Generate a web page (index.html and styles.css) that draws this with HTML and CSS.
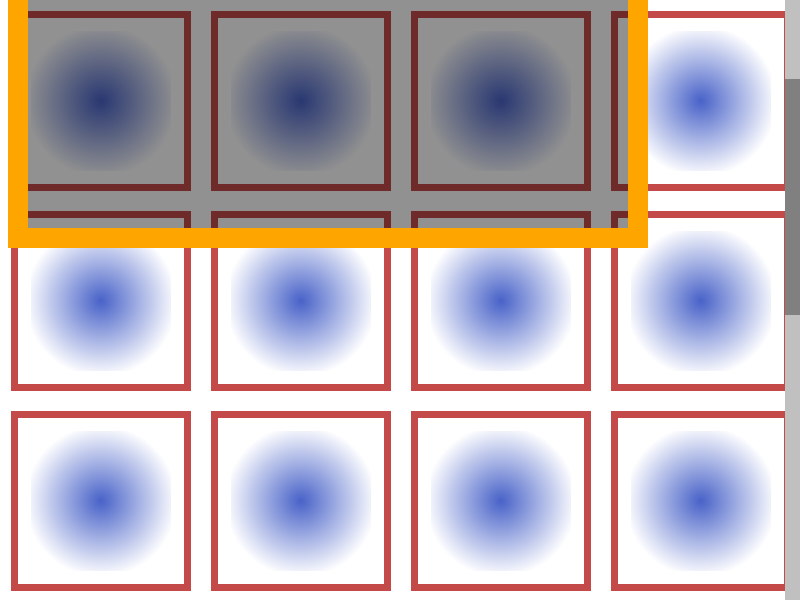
FILE: index.html
```html
<!DOCTYPE html>
<html lang="en">

<head>
    <meta charset="UTF-8">
    <meta name="viewport" content="width=device-width, initial-scale=1.0">
    <title>Selection Grid</title>
    <link rel="stylesheet" href="styles.css">
</head>

<body>
    <div class="grid">
        <div class="tile"><div class="blob"></div></div>
        <div class="tile"><div class="blob"></div></div>
        <div class="tile"><div class="blob"></div></div>
        <div class="tile"><div class="blob"></div></div>
        <div class="tile"><div class="blob"></div></div>
        <div class="tile"><div class="blob"></div></div>
        <div class="tile"><div class="blob"></div></div>
        <div class="tile"><div class="blob"></div></div>
        <div class="tile"><div class="blob"></div></div>
        <div class="tile"><div class="blob"></div></div>
        <div class="tile"><div class="blob"></div></div>
        <div class="tile"><div class="blob"></div></div>
        <div class="tile"><div class="blob"></div></div>
        <div class="tile"><div class="blob"></div></div>
        <div class="tile"><div class="blob"></div></div>
        <div class="tile"><div class="blob"></div></div>
        <div class="tile"><div class="blob"></div></div>
        <div class="tile"><div class="blob"></div></div>
        <div class="tile"><div class="blob"></div></div>
        <div class="tile"><div class="blob"></div></div>
        <div class="tile"><div class="blob"></div></div>
        <div class="tile"><div class="blob"></div></div>
        <div class="tile"><div class="blob"></div></div>
        <div class="tile"><div class="blob"></div></div>
        <div class="tile"><div class="blob"></div></div>
        <div class="tile"><div class="blob"></div></div>
        <div class="tile"><div class="blob"></div></div>
        <div class="tile"><div class="blob"></div></div>
    </div>

    <div class="selection"></div>

    <div class="scrollbar">
        <div class="scrollbar-thumb"></div>
    </div>

    <script>
        window.scrollTo(0, 200);
    </script>
</body>

</html>
```

FILE: styles.css
```css
body {
    margin: 0;
    padding: 0;
    background-color: #fff;
    overflow-x: hidden;
    position: relative;
    min-height: 1525px;
}

.grid {
    display: grid;
    grid-template-columns: repeat(4, 180px);
    gap: 20px;
    padding: 11px;
    width: max-content;
}

.tile {
    width: 180px;
    height: 180px;
    box-sizing: border-box;
    border: 7px solid #c44a4a;
    padding: 13px;
}

.blob {
    width: 140px;
    height: 140px;
    background: radial-gradient(circle 76px at center, #4862c8 0%, rgba(72, 98, 200, 0) 100%);
}

.selection {
    position: absolute;
    left: 8px;
    top: 8px;
    width: 600px;
    height: 400px;
    border: 20px solid #ffa500;
    background-color: rgba(0, 0, 0, 0.43);
}

/* drawn scroll bar, the real one is hidden in screenshots */
.scrollbar {
    position: fixed;
    top: 0;
    right: 0;
    width: 15px;
    height: 100vh;
    background-color: #c0c0c0;
}

.scrollbar-thumb {
    margin-top: 79px;
    height: 236px;
    background-color: #808080;
}
```
